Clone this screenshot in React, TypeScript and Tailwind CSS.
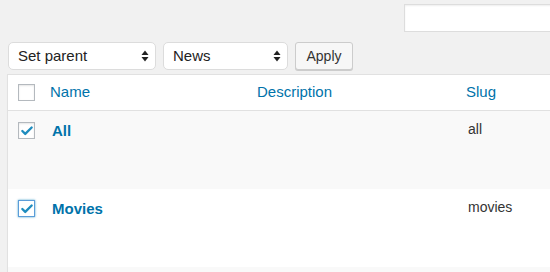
import { Check } from 'lucide-react'

type Row = { name: string; slug: string; focused?: boolean }

const rows: Row[] = [
  { name: 'All', slug: 'all' },
  { name: 'Movies', slug: 'movies', focused: true },
]

function Updown() {
  return (
    <svg viewBox="0 0 8 12" className="w-[8px] h-[12px]" aria-hidden="true">
      <path d="M4 0.5 L7.5 5 H0.5 Z" fill="#222" />
      <path d="M4 11.5 L7.5 7 H0.5 Z" fill="#222" />
    </svg>
  )
}

function Select({ label, width }: { label: string; width: string }) {
  return (
    <div
      className={`${width} h-[28px] flex items-center justify-between pl-[9px] pr-[6px] bg-white border border-[#dcdcdc] rounded-[5px] text-[15px] text-[#222]`}
    >
      <span>{label}</span>
      <Updown />
    </div>
  )
}

function Box({ checked, focused }: { checked?: boolean; focused?: boolean }) {
  return (
    <span
      className={`w-[17px] h-[17px] flex items-center justify-center bg-white border ${
        focused
          ? 'border-[#5b9dd9] shadow-[0_0_2px_rgba(30,140,190,0.8)]'
          : 'border-[#b4b9be] shadow-[inset_0_1px_2px_rgba(0,0,0,0.1)]'
      }`}
    >
      {checked && <Check className="w-[14px] h-[14px] text-[#1e8cbe]" strokeWidth={4} />}
    </span>
  )
}

export default function App() {
  return (
    <div className="w-[550px] h-[272px] overflow-hidden bg-[#f1f1f1] font-['Liberation_Sans',Arial,sans-serif]">
      <div className="flex justify-end pt-[4px]">
        <input
          className="w-[160px] h-[28px] -mr-[14px] bg-white border border-[#dddddd] shadow-[inset_0_1px_2px_rgba(0,0,0,0.07)] outline-none"
          aria-label="Search"
        />
      </div>

      <div className="flex gap-[7px] pl-[8px] mt-[10px]">
        <Select label="Set parent" width="w-[148px]" />
        <Select label="News" width="w-[125px]" />
        <button className="w-[58px] h-[28px] bg-[#f7f7f7] border border-[#cccccc] rounded-[3px] shadow-[0_1px_0_#cccccc] text-[14px] text-[#333]">
          Apply
        </button>
      </div>

      <div className="mt-[4px] ml-[7px] w-[600px] border border-[#e1e1e1] bg-white shadow-[0_1px_1px_rgba(0,0,0,0.04)]">
        <div className="grid grid-cols-[34px_207px_209px_1fr] h-[36px] items-center border-b border-[#e1e1e1] text-[15px] text-[#0073aa]">
          <div className="pl-[10px] flex">
            <Box />
          </div>
          <div className="pl-[8px]">Name</div>
          <div className="pl-[8px]">Description</div>
          <div className="pl-[8px]">Slug</div>
        </div>

        {rows.map((r, i) => (
          <div
            key={r.slug}
            className={`grid grid-cols-[34px_207px_209px_1fr] h-[78px] items-start pt-[10px] ${
              i % 2 === 0 ? 'bg-[#f9f9f9]' : 'bg-white'
            }`}
          >
            <div className="pl-[10px] pt-[1px] flex">
              <Box checked focused={r.focused} />
            </div>
            <div className="pl-[10px] leading-[20px] text-[15px] font-bold text-[#0073aa]">{r.name}</div>
            <div />
            <div className="pl-[10px] leading-[16px] text-[14px] text-[#333]">{r.slug}</div>
          </div>
        ))}
        <div className="h-[40px] bg-[#f9f9f9]" />
      </div>
    </div>
  )
}
